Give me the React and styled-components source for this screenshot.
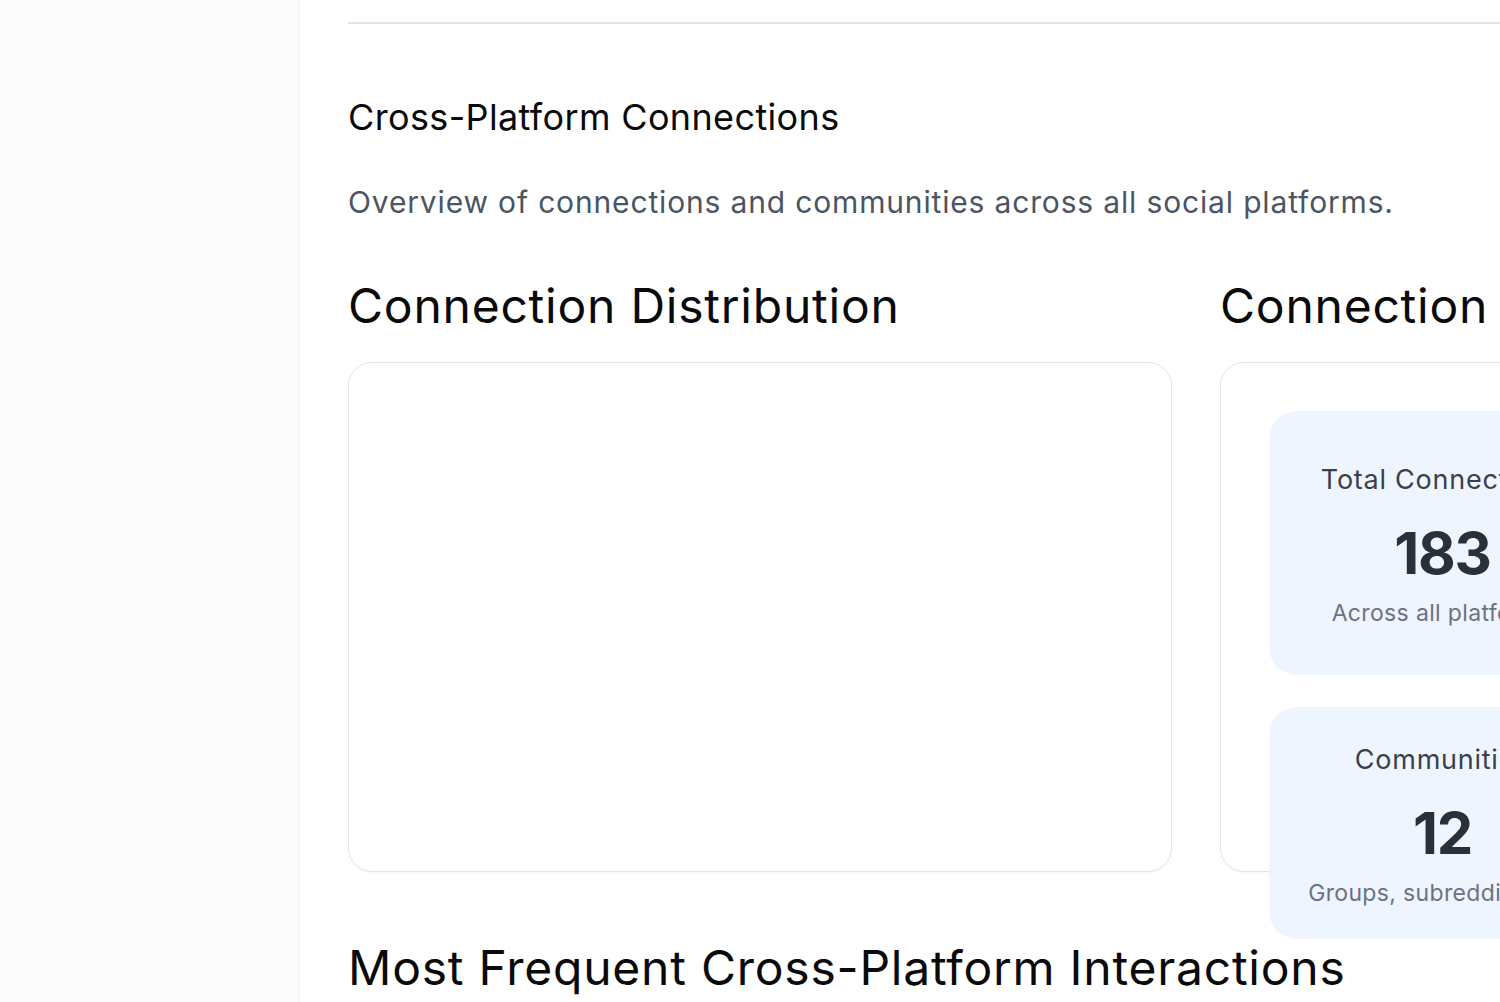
import React from "react";
import styled, { createGlobalStyle } from "styled-components";

const GlobalStyle = createGlobalStyle`
  html, body {
    margin: 0;
    padding: 0;
    background: #ffffff;
    overflow: hidden;
  }
  * { box-sizing: border-box; }
  body {
    font-family: "Inter", "Liberation Sans", sans-serif;
  }
`;

const Shell = styled.div`
  display: flex;
  align-items: stretch;
  min-height: 1002px;
  width: max-content;
`;

const Sidebar = styled.aside`
  flex: 0 0 300px;
  width: 300px;
  background: #fbfbfb;
  border-right: 1px solid #f3f3f3;
`;

const Main = styled.main`
  flex: none;
  padding: 0 48px;
  display: flex;
  flex-direction: column;
`;

const TopBar = styled.div`
  height: 24px;
  border-bottom: 2px solid #e5e5e5;
`;

const SectionTitle = styled.h2`
  margin: 72px 0 0;
  font-family: "Inter", "Liberation Sans", sans-serif;
  font-weight: 400;
  font-size: 36px;
  line-height: 43px;
  letter-spacing: 0.01em;
  color: #0a0a0a;
`;

const SectionLead = styled.p`
  margin: 45px 0 0;
  font-size: 30px;
  line-height: 36px;
  letter-spacing: 0.028em;
  color: #4b5563;
  white-space: nowrap;
`;

const Columns = styled.div`
  margin-top: 57px;
  display: grid;
  grid-template-columns: repeat(2, 824px);
  column-gap: 48px;
`;

const Column = styled.section`
  display: flex;
  flex-direction: column;
`;

const BlockTitle = styled.h3`
  margin: 0;
  font-weight: 400;
  font-size: 48px;
  line-height: 58px;
  letter-spacing: 0.016em;
  color: #0a0a0a;
  white-space: nowrap;
`;

const Card = styled.div`
  margin-top: 27px;
  height: 510px;
  border: 1px solid #e4e4e4;
  border-radius: 24px;
  background: #ffffff;
  box-shadow: 0 1px 3px rgba(0, 0, 0, 0.04);
  padding: 48px;
`;

const StatGrid = styled.div`
  display: grid;
  grid-template-columns: repeat(2, 1fr);
  gap: 32px;
`;

const StatBox = styled.div`
  background: #eff5fe;
  border-radius: 28px;
  padding: 33px 20px 30px;
  display: flex;
  flex-direction: column;
  align-items: center;
  justify-content: center;
  text-align: center;
`;

const StatLabel = styled.div`
  font-size: 27px;
  line-height: 40px;
  letter-spacing: 0.028em;
  color: #3a3f4b;
  white-space: nowrap;
`;

const StatValue = styled.div`
  margin-top: 17px;
  font-size: 58px;
  line-height: 72px;
  font-weight: 700;
  letter-spacing: -0.02em;
  color: #2b2f38;
`;

const StatNote = styled.div`
  margin-top: 8px;
  font-size: 23px;
  line-height: 32px;
  letter-spacing: 0.015em;
  color: #6b7280;
`;

const NextTitle = styled(BlockTitle)`
  margin-top: 67px;
`;

const stats = [
  { label: "Total Connections", value: "183", note: "Across all platforms" },
  { label: "Active Platforms", value: "5", note: "Facebook, Instagram, Twitter, Reddit, LinkedIn" },
  { label: "Communities", value: "12", note: "Groups, subreddits, etc." },
  { label: "Cross-Platform", value: "34", note: "People on 2+ platforms" },
];

export default function App() {
  return (
    <>
      <GlobalStyle />
      <Shell>
        <Sidebar />
        <Main>
          <TopBar />
          <SectionTitle>Cross-Platform Connections</SectionTitle>
          <SectionLead>
            Overview of connections and communities across all social platforms.
          </SectionLead>
          <Columns>
            <Column>
              <BlockTitle>Connection Distribution</BlockTitle>
              <Card />
            </Column>
            <Column>
              <BlockTitle>Connection Summary</BlockTitle>
              <Card>
                <StatGrid>
                  {stats.map((s) => (
                    <StatBox key={s.label}>
                      <StatLabel>{s.label}</StatLabel>
                      <StatValue>{s.value}</StatValue>
                      <StatNote>{s.note}</StatNote>
                    </StatBox>
                  ))}
                </StatGrid>
              </Card>
            </Column>
          </Columns>
          <NextTitle>Most Frequent Cross-Platform Interactions</NextTitle>
        </Main>
      </Shell>
    </>
  );
}
